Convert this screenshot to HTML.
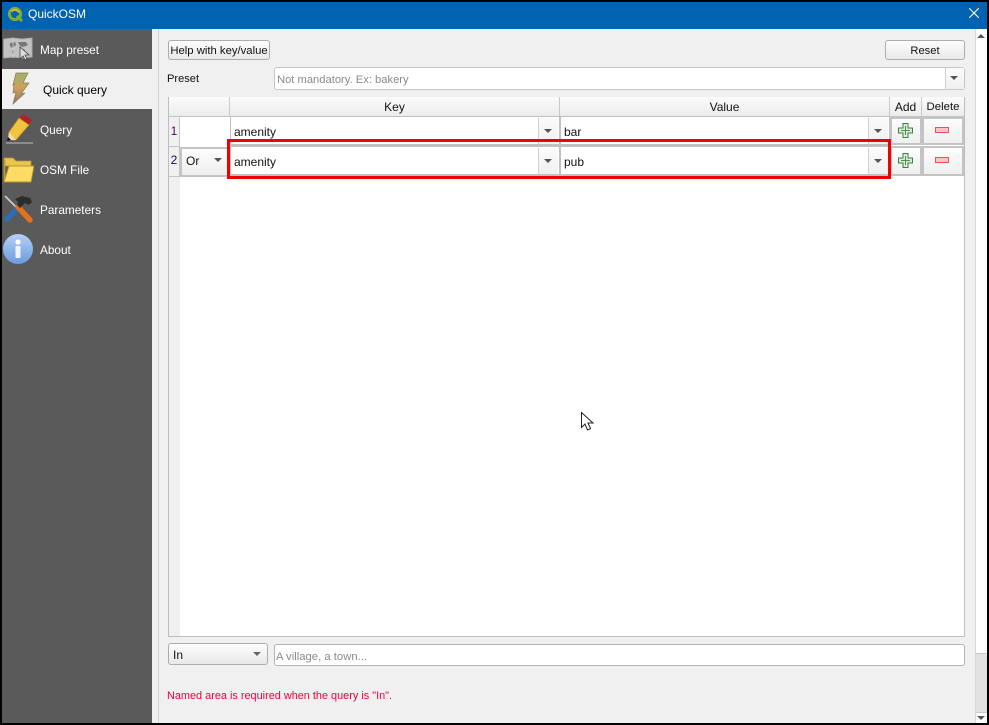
<!DOCTYPE html>
<html><head><meta charset="utf-8"><style>
html,body{margin:0;padding:0;background:#000;}
#r{position:relative;width:989px;height:725px;overflow:hidden;background:#000;font-family:"Liberation Sans",sans-serif;font-size:12px;color:#111;}
#r div,#r svg,#r span{position:absolute;box-sizing:border-box;}
.t{white-space:nowrap;line-height:14px;}
.nav{color:#fff;left:40px;font-size:11.8px;}
.btn{background:linear-gradient(#fdfdfd,#e9e9e9);border:1px solid #adadad;border-radius:3px;text-align:center;}
.combo{background:#fff;}
.arrow{width:0;height:0;border-left:4px solid transparent;border-right:4px solid transparent;border-top:4px solid #555;}
.hd{background:linear-gradient(#fbfbfb,#ececec);border-right:1px solid #c9c9c9;border-bottom:1px solid #c4c4c4;text-align:center;line-height:20px;height:20px;top:97px;}
.cell{background:linear-gradient(#fdfdfd,#efefef);border:2px solid #c4c4c4;}
.drop{background:linear-gradient(#fbfbfb,#f0f0f0);border-left:1px solid #d0d0d0;}
.in{border-style:solid;border-color:#c0c0c0;border-width:1px 1px 2px 1px;padding-left:3px;line-height:30px;height:30px;width:330px;}
</style></head><body><div id="r">
<div style="left:2px;top:2px;width:985px;height:721px;background:#f0f0f0"></div>
<div style="left:2px;top:2px;width:985px;height:27px;background:#0063b1"></div>
<svg style="left:7px;top:5px" width="18" height="18" viewBox="0 0 18 18"><circle cx="8" cy="9" r="5.6" fill="none" stroke="#7fae2e" stroke-width="3"/><path d="M4.500 6.500A4.500 4.500 0 0 1 12 7.500" fill="none" stroke="#d9b53c" stroke-width="2"/><path d="M10 11l5 5" stroke="#7fae2e" stroke-width="3"/></svg>
<div class="t" style="left:28px;top:7px;color:#fff;font-size:12px">QuickOSM</div>
<svg style="left:969px;top:8px" width="10" height="10" viewBox="0 0 10 10"><path d="M0 0l10 10M10 0L0 10" stroke="#fff" stroke-width="1.1" fill="none"/></svg>

<div style="left:2px;top:29px;width:150px;height:694px;background:#5a5a5a"></div>
<div style="left:2px;top:69px;width:150px;height:40px;background:#f0f0f0"></div>
<svg style="left:3px;top:36px" width="30" height="26" viewBox="0 0 30 26"><path d="M1 3l9-1 9 1 10-1v19l-10 1-9-1-9 1z" fill="#c2c2c2" stroke="#a8a8a8"/><path d="M7 7l5-1 1 3-4 3-2-2zM15 6l8 0 2 3-5 2-3-1zM9 14l2 1-1 4-1-2zM20 13l2 1-1 3-1-1z" fill="#767676"/><path d="M1 3v19M10 2v20" stroke="#d8d8d8" stroke-width=".8"/><path d="M17 11v12l3-3 2 4 2-1-2-4h4z" fill="#ddd" stroke="#444" stroke-width=".8"/></svg>
<div class="t nav" style="top:43px">Map preset</div>
<svg style="left:10px;top:72px" width="22" height="34" viewBox="0 0 22 34"><defs><linearGradient id="b" x1="0" y1="0" x2="0" y2="1"><stop offset="0" stop-color="#9fb36a"/><stop offset=".5" stop-color="#cf9f5c"/><stop offset="1" stop-color="#8d7a62"/></linearGradient></defs><path d="M6 1h12l-5 10h6L11 22l4-1L3 32l3-12-3 1 1-9-1 1z" fill="url(#b)" stroke="#8a7a58" stroke-width=".7"/></svg>
<div class="t" style="left:43px;top:83px;color:#000">Quick query</div>
<svg style="left:5px;top:113px" width="28" height="32" viewBox="0 0 28 32"><path d="M18 1l9 6-3 5-10-7z" fill="#b3202a"/><path d="M14 5l10 7-13 15-8 0 1-8z" fill="#f2c33c" stroke="#b98d22" stroke-width=".7"/><path d="M4 19l7 8-8 0z" fill="#f0dcb0"/><path d="M3 24l3 3-4 1z" fill="#111"/><rect x="1" y="29" width="27" height="2" fill="#8c8c8c"/></svg>
<div class="t nav" style="top:123px">Query</div>
<svg style="left:3px;top:156px" width="31" height="28" viewBox="0 0 31 28"><path d="M1 2h9l3 3h15v5H1z" fill="#e8c64a" stroke="#b3952e" stroke-width=".8"/><path d="M1 26V4h1v22" fill="#e8c64a" stroke="#b3952e" stroke-width=".8"/><path d="M6 10h25l-3 16H1z" fill="#fcdc64" stroke="#b3952e" stroke-width=".9"/></svg>
<div class="t nav" style="top:163px">OSM File</div>
<svg style="left:3px;top:194px" width="31" height="31" viewBox="0 0 31 31"><path d="M2 2l15 15" stroke="#c9c9c9" stroke-width="1.800"/><path d="M14 15L4 25" stroke="#2f6cb0" stroke-width="5.500" stroke-linecap="round"/><path d="M15 13l12 13" stroke="#e6711c" stroke-width="5.500" stroke-linecap="round"/><path d="M12 5l7-3 8 2 2 4-3 3-4-2-5 5-3-3 1-3z" fill="#2d2d2d"/></svg>
<div class="t nav" style="top:203px">Parameters</div>
<svg style="left:2px;top:233px" width="32" height="32" viewBox="0 0 32 32"><defs><linearGradient id="g" x1="0" y1="0" x2="0" y2="1"><stop offset="0" stop-color="#b5d0f3"/><stop offset="1" stop-color="#6a9ce0"/></linearGradient></defs><circle cx="16" cy="16" r="15" fill="url(#g)"/><circle cx="16" cy="9" r="2.600" fill="#fff"/><rect x="13.500" y="13" width="5" height="12" rx="1" fill="#eef4fd"/></svg>
<div class="t nav" style="top:243px">About</div>

<div style="left:158px;top:29px;width:1px;height:694px;background:#d2d2d2"></div>
<div class="btn t" style="left:168px;top:40px;width:102px;height:20px;line-height:20px;font-size:11.3px">Help with key/value</div>
<div class="btn t" style="left:885px;top:40px;width:80px;height:20px;line-height:20px;font-size:11.2px">Reset</div>
<div class="t" style="left:167px;top:72px;font-size:11.1px">Preset</div>
<div class="combo" style="left:274px;top:67px;width:691px;height:23px;border:1px solid #c6c6c6;border-radius:3px"></div>
<div class="t" style="left:277px;top:73px;color:#8a8a8a;font-size:11.2px">Not mandatory. Ex: bakery</div>
<div class="drop" style="left:945px;top:68px;width:19px;height:21px"></div>
<div class="arrow" style="left:950px;top:76px"></div>

<!-- table -->
<div style="left:168px;top:97px;width:797px;height:540px;background:#fff;border:1px solid #bdbdbd"></div>
<div style="left:169px;top:177px;width:11px;height:459px;background:#f0f0f0"></div>
<div class="hd" style="left:169px;width:61px"></div>
<div class="hd t" style="left:230px;width:330px">Key</div>
<div class="hd t" style="left:560px;width:330px">Value</div>
<div class="hd t" style="left:890px;width:32px">Add</div>
<div class="hd t" style="left:922px;width:42px;border-right:0;font-size:11.4px;line-height:21px">Delete</div>
<div class="t" style="left:169px;top:117px;width:11px;height:30px;background:#f0f0f0;border-right:1px solid #c4c4c4;border-bottom:1px solid #c4c4c4;line-height:29px;text-align:center;color:#4b0a5a">1</div>
<div class="t" style="left:169px;top:147px;width:11px;height:30px;background:#f0f0f0;border-right:1px solid #c4c4c4;border-bottom:1px solid #c4c4c4;line-height:27px;text-align:center;color:#1a0a5a">2</div>
<div style="left:180px;top:147px;width:50px;height:1px;background:#c4c4c4"></div>

<!-- row 1 -->
<div class="combo t in" style="left:230px;top:116px"><span style="position:static">amenity</span></div>
<div class="drop" style="left:538px;top:118px;width:20px;height:26px"></div><div class="arrow" style="left:544px;top:129px"></div>
<div class="combo t in" style="left:560px;top:116px"><span style="position:static">bar</span></div>
<div class="drop" style="left:868px;top:118px;width:20px;height:26px"></div><div class="arrow" style="left:874px;top:129px"></div>
<div class="cell" style="left:890px;top:117px;width:32px;height:28px"></div>
<div class="cell" style="left:922px;top:117px;width:42px;height:28px"></div>
<svg style="left:898px;top:123px" width="15" height="15" viewBox="0 0 15 15"><path d="M5 .5h5v4.500h4.500v5H10v4.500H5V10H.5V5H5z" fill="#dcecd8" stroke="#3f7f45"/><path d="M7.500 3v9M3 7.500h9" stroke="#4f8f55" stroke-width="1"/></svg>
<div style="left:935px;top:127px;width:14px;height:6px;background:#fbc4c4;border:1px solid #e8505a"></div>

<!-- row 2 -->
<div class="cell t" style="left:180px;top:147px;width:50px;height:30px;line-height:25px;padding-left:4px"><span style="position:static">Or</span></div>
<div class="arrow" style="left:214px;top:158px"></div>
<div class="combo t in" style="left:230px;top:146px"><span style="position:static">amenity</span></div>
<div class="drop" style="left:538px;top:148px;width:20px;height:26px"></div><div class="arrow" style="left:544px;top:159px"></div>
<div class="combo t in" style="left:560px;top:146px"><span style="position:static">pub</span></div>
<div class="drop" style="left:868px;top:148px;width:20px;height:26px"></div><div class="arrow" style="left:874px;top:159px"></div>
<div class="cell" style="left:890px;top:146px;width:32px;height:30px"></div>
<div class="cell" style="left:922px;top:146px;width:42px;height:30px"></div>
<svg style="left:898px;top:153px" width="15" height="15" viewBox="0 0 15 15"><path d="M5 .5h5v4.500h4.500v5H10v4.500H5V10H.5V5H5z" fill="#dcecd8" stroke="#3f7f45"/><path d="M7.500 3v9M3 7.500h9" stroke="#4f8f55" stroke-width="1"/></svg>
<div style="left:935px;top:157px;width:14px;height:6px;background:#fbc4c4;border:1px solid #e8505a"></div>

<div style="left:227px;top:139px;width:664px;height:40px;border:3px solid #f00000"></div>

<svg style="left:580px;top:411px" width="16" height="22" viewBox="0 0 16 22"><path d="M1.500 1.500v15l3.500-3.500 2.500 6 3-1.300-2.500-5.700h5z" fill="#fff" stroke="#222" stroke-width="1"/></svg>

<!-- bottom -->
<div class="btn t" style="left:168px;top:643px;width:100px;height:22px;line-height:23px;text-align:left;padding-left:4px">In</div>
<div class="arrow" style="left:253px;top:652px;border-top-color:#666"></div>
<div style="left:274px;top:644px;width:691px;height:22px;background:#fff;border:1px solid #b4b4b4;border-radius:3px"></div>
<div class="t" style="left:276px;top:650px;color:#8a8a8a;font-size:11.3px">A village, a town...</div>
<div class="t" style="left:167px;top:689px;color:#f0003c;font-size:10.9px">Named area is required when the query is "In".</div>

<!-- scrollbar -->
<div style="left:975px;top:29px;width:12px;height:694px;background:#fff;border-left:1px solid #d8d8d8"></div>
<div class="arrow" style="left:977px;top:34px;border-top:0;border-bottom:4px solid #555"></div>
<div style="left:975px;top:653px;width:12px;height:60px;background:#e2e2e2;border-top:1px solid #c8c8c8;border-bottom:1px solid #c8c8c8;border-left:1px solid #d8d8d8"></div>
<div class="arrow" style="left:977px;top:716px"></div>
</div></body></html>
